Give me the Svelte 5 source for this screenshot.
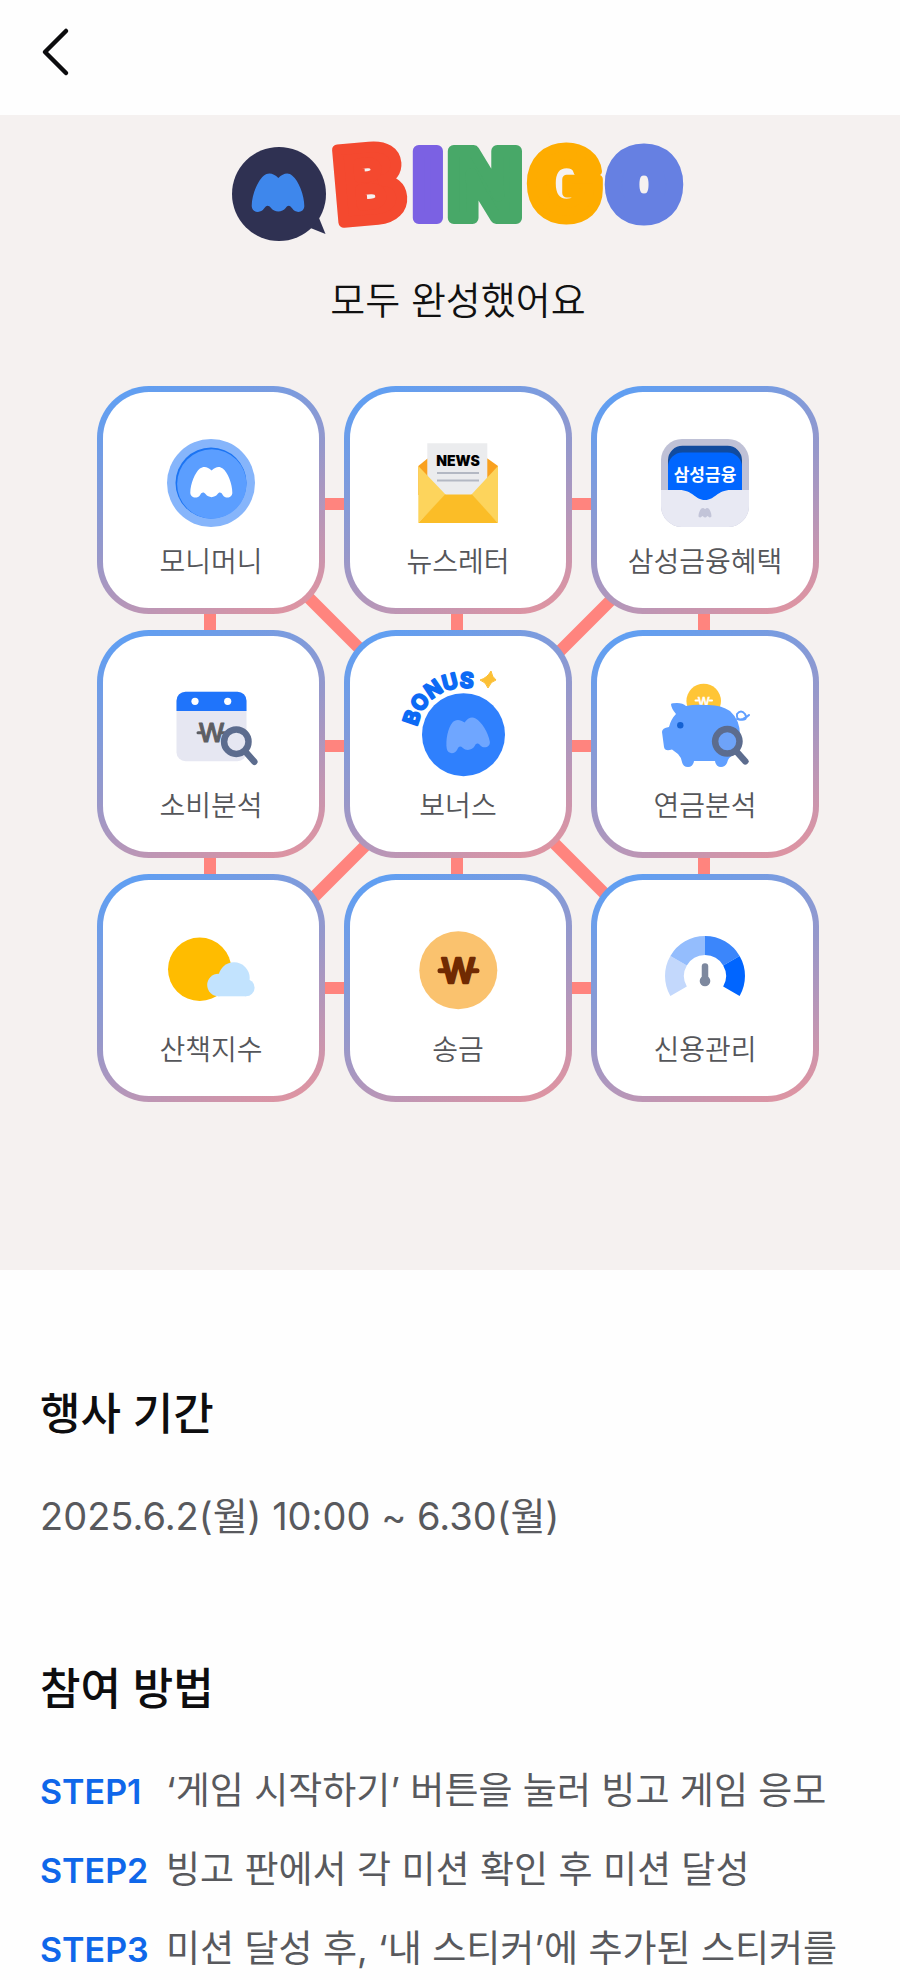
<script lang="ts">
  type Mission = { icon: string; label: string };
  type Step = { name: string; text: string };

  const missions: Mission[] = [
    { icon: "moni", label: "모니머니" },
    { icon: "news", label: "뉴스레터" },
    { icon: "benefit", label: "삼성금융혜택" },
    { icon: "calendar", label: "소비분석" },
    { icon: "bonus", label: "보너스" },
    { icon: "pension", label: "연금분석" },
    { icon: "weather", label: "산책지수" },
    { icon: "transfer", label: "송금" },
    { icon: "credit", label: "신용관리" },
  ];

  const steps: Step[] = [
    { name: "STEP1", text: "‘게임 시작하기’ 버튼을 눌러 빙고 게임 응모" },
    { name: "STEP2", text: "빙고 판에서 각 미션 확인 후 미션 달성" },
    { name: "STEP3", text: "미션 달성 후, ‘내 스티커’에 추가된 스티커를" },
  ];

  // brand mark, drawn in a 158 x 115 box
  const mark =
    "M0 98C0 65 18 22 36 7C50-4 66 0 80 14C94 0 110-4 122 7C141 22 158 65 158 98C158 118 132 122 122 106C115 94 108 95 102 104C92 118 68 118 58 104C51 95 44 94 37 106C27 122 0 118 0 98Z";
</script>

{#snippet magnifier(x: number, y: number, lens: string)}
  <g transform="translate({x} {y})" stroke="#5c6c8e">
    <path d="M10 11L18 20" stroke-width="6.5" stroke-linecap="round" />
    <circle r="12.2" fill={lens} stroke-width="6.5" />
  </g>
{/snippet}

<header class="topbar">
  <button class="back" type="button" aria-label="뒤로">
    <svg width="32" height="52" viewBox="0 0 32 52" fill="none" aria-hidden="true">
      <path d="M26 5L5 26L26 47" stroke="#0c0c0e" stroke-width="4.500" stroke-linecap="round" stroke-linejoin="round" />
    </svg>
  </button>
</header>

<main>
  <section class="hero">
    <h1 class="logo">
      <svg viewBox="0 0 452 100" width="452" height="100" role="img" aria-label="BINGO">
        <path d="M87 75L93.500 91L76 84Z" fill="#2f3152" />
        <circle cx="47" cy="51" r="47" fill="#2f3152" />
        <path d={mark} transform="translate(19.700 30.300) scale(.333)" fill="#3e87ec" />
        <g class="letters">
          <text class="wide" x="137.500" y="77" fill="#f4492f" stroke="#f4492f" transform="rotate(-5 138 42)">B</text>
          <text x="196" y="75" fill="#7b61e3" stroke="#7b61e3">I</text>
          <text x="253" y="75" fill="#48a868" stroke="#48a868">N</text>
          <text class="open" x="333" y="76" fill="#feac00" stroke="#feac00">G</text>
          <text class="tight" x="412" y="73" fill="#6680e2" stroke="#6680e2">O</text>
        </g>
      </svg>
    </h1>
    <p class="status">모두 완성했어요</p>

    <div class="board">
      <svg class="lines" viewBox="0 0 722 716" preserveAspectRatio="none" aria-hidden="true">
        <path d="M113 118H607M113 360H607M113 602H607M113 118V602M360 118V602M607 118V602M113 113L607 607M615 113L121 607" />
      </svg>
      {#each missions as mission (mission.icon)}
        <button class="cell" type="button">
          <svg class="icon" viewBox="0 0 88 88" fill="none" aria-hidden="true">
            {#if mission.icon === "moni"}
              <circle cx="44" cy="44" r="44" fill="#86b5fb" />
              <circle cx="44" cy="44" r="35.500" fill="#1b74f3" />
              <circle cx="44.800" cy="45" r="34.700" fill="#5b9eff" />
              <path d={mark} transform="translate(23.300 27.700) scale(.266)" fill="#fff" />
            {:else if mission.icon === "news"}
              <path d="M4.300 27L13.500 19.500H73.500L84 27V56H4.300Z" fill="#f9a11f" />
              <path d="M13.300 4.300H73.300V60H13.300Z" fill="#ebecee" />
              <text class="news" x="44" y="27">NEWS</text>
              <path d="M23 34H65M23 41.500H65" stroke="#b3b8c3" stroke-width="2" />
              <path d="M4.300 27L32 56L4.300 84Z" fill="#fdd45c" />
              <path d="M84 27L57 56L84 84Z" fill="#fdd45c" />
              <path d="M4.300 84L31 55.500H58L84 84Z" fill="#fbbd27" />
            {:else if mission.icon === "benefit"}
              <rect width="88" height="88" rx="21" fill="#bfc1d6" />
              <path d="M7 62V21A14.500 14.500 0 0 1 21.500 6.700H66.500A14.500 14.500 0 0 1 81 21V62Z" fill="#114b9e" />
              <path d="M7 62V28A14.500 14.500 0 0 1 21.500 13.500H66.500A14.500 14.500 0 0 1 81 28V62Z" fill="#0066ff" />
              <text class="brand" x="44" y="42">삼성금융</text>
              <path d="M0 51H18C32 51 34 61 44 61C54 61 56 51 70 51H88V67A21 21 0 0 1 67 88H21A21 21 0 0 1 0 67Z" fill="#e8e9f3" />
              <path d={mark} transform="translate(37.500 69) scale(.082)" fill="#c2c4d8" />
            {:else if mission.icon === "calendar"}
              <rect x="9.500" y="8.700" width="70" height="69.500" rx="9" fill="#e6e7f2" />
              <path d="M9.500 28V17.700A9 9 0 0 1 18.500 8.700H70.500A9 9 0 0 1 79.500 17.700V28Z" fill="#1f74fb" />
              <circle cx="28" cy="18.300" r="3.600" fill="#fff" />
              <circle cx="60.700" cy="18.300" r="3.600" fill="#fff" />
              <g fill="#5d5e63" stroke="#5d5e63" stroke-linecap="round" stroke-linejoin="round">
                <path d="M31 49.700H36M53 49.700H58" stroke-width="3" />
                <text class="won" x="44.500" y="59" font-size="26" stroke-width="1">W</text>
              </g>
              {@render magnifier(69.3, 58.7, "#e6e7f2")}
            {:else if mission.icon === "bonus"}
              <circle cx="49.500" cy="51.700" r="41.500" fill="#2f80fd" />
              <path d={mark} transform="rotate(-10 52 51) translate(30.500 35.500) scale(.276)" fill="#6fa6ff" />
              <path id="bonus-arc" d="M3.200 43.500A47 47 0 0 1 96.500 51.700" />
              <text class="bonus"><textPath href="#bonus-arc">BONUS</textPath></text>
              <path d="M77-12Q78-6 82-3Q77-2 74 5Q72-1 66-3Q73-5 77-12Z" fill="#fcc035" stroke="#fcc035" stroke-linejoin="round" />
            {:else if mission.icon === "pension"}
              <circle cx="42.700" cy="18" r="17.300" fill="#ffc536" />
              <path d="M34.500 17.500H37M48.500 17.500H51" stroke="#fff" stroke-width="2" stroke-linecap="round" />
              <text class="won" x="42.700" y="22.500" font-size="12" fill="#fff" stroke="#fff" stroke-width=".5">W</text>
              <path d="M76 36Q88 39 84 31Q80 26 76 31Q75 38 82 36Q86 34 88 32" stroke="#609fff" stroke-width="2" stroke-linecap="round" />
              <path d="M10 21Q11 20 16 20Q22 20 25 23Q34 21 44 22Q59 21 69 28Q79 37 79 52Q79 64 74 71Q67 74 66 80Q64 84 60 84Q55 84 54 78H33Q32 84 27 84Q22 84 21 79Q20 74 17 71L11 66.500Q4 69 3 64L1 49Q1 45 8 44Q10 36 15 31Q10 25 10 21Z" fill="#609fff" />
              <circle cx="19.300" cy="42.300" r="3.200" fill="#1461d2" />
              {@render magnifier(66.3, 58.3, "#6ea3f8")}
            {:else if mission.icon === "weather"}
              <circle cx="32.700" cy="42.300" r="31.700" fill="#ffbc00" />
              <g fill="#c2e3fe">
                <circle cx="51.500" cy="58" r="11.300" />
                <circle cx="67" cy="51" r="15.700" />
                <circle cx="79" cy="60.700" r="8.600" />
                <path d="M51 52H79V69.300H51Z" />
              </g>
            {:else if mission.icon === "transfer"}
              <circle cx="44.300" cy="43.300" r="39" fill="#fac26e" />
              <g fill="#702a02" stroke="#702a02" stroke-linecap="round" stroke-linejoin="round">
                <path d="M26 43.700H32M57 43.700H63" stroke-width="5" />
                <text class="won" x="44.300" y="56.300" font-size="34" stroke-width="2.500">W</text>
              </g>
            {:else}
              <g stroke-width="19">
                <path d="M17.600 64.250A30.500 30.500 0 0 1 17.600 33.750" stroke="#c3d8fc" />
                <path d="M17.600 33.750A30.500 30.500 0 0 1 44 18.500" stroke="#94bdfd" />
                <path d="M44 18.500A30.500 30.500 0 0 1 70.400 33.750" stroke="#3b86fb" />
                <path d="M70.400 33.750A30.500 30.500 0 0 1 70.400 64.250" stroke="#0065ff" />
              </g>
              <path d="M44 39.500V54" stroke="#7d889e" stroke-width="6.500" stroke-linecap="round" />
              <circle cx="44" cy="54" r="5.300" fill="#7d889e" />
            {/if}
          </svg>
          <span class="label">{mission.label}</span>
        </button>
      {/each}
    </div>
  </section>

  <section class="info">
    <h2>행사 기간</h2>
    <p>2025.6.2(월) 10:00 ~ 6.30(월)</p>
  </section>

  <section class="info">
    <h2>참여 방법</h2>
    <ol>
      {#each steps as step (step.name)}
        <li>
          <strong>{step.name}</strong>
          <span>{step.text}</span>
        </li>
      {/each}
    </ol>
  </section>
</main>

<style>
  :global(body) { background: #fefefe; color: #111; font-family: Inter, "Noto Sans CJK KR", sans-serif; }
  h1, h2, p, ol { margin: 0; padding: 0; }
  button { border: 0; padding: 0; background: none; font: inherit; color: inherit; cursor: pointer; }

  .topbar { display: flex; align-items: center; box-sizing: border-box; height: 115px; padding: 0 40px 12px; }
  .back { display: flex; }

  .hero { background: #f5f1f0; padding: 28px 81px 168px 97px; }
  .logo { display: flex; justify-content: center; }
  .logo svg { display: block; overflow: visible; }
  .letters { font: 900 92px Inter, sans-serif; text-anchor: middle; stroke-width: 12px; stroke-linejoin: round; }
  .wide { font-size: 100px; stroke-width: 11px; }
  .open { font-size: 98px; stroke-width: 9px; }
  .tight { font-size: 87px; stroke-width: 17px; }
  .status { margin-top: 31px; margin-bottom: 60px; font-size: 38px; line-height: 52px; font-weight: 350; text-align: center; }

  .board { position: relative; display: grid; grid-template-columns: repeat(3, 1fr); gap: 16px 19px; }
  .lines { position: absolute; inset: 0; width: 100%; height: 100%; }
  .lines path { stroke: #ff847e; stroke-width: 12px; fill: none; }
  .cell {
    position: relative;
    display: flex;
    flex-direction: column;
    align-items: center;
    gap: 17px;
    box-sizing: border-box;
    aspect-ratio: 1;
    padding-top: 47px;
    border: 6px solid transparent;
    border-radius: 52px;
    background: linear-gradient(#fff, #fff) padding-box, linear-gradient(155deg, #5f9ff3 5%, #9698cb 50%, #de94a2 95%) border-box;
  }
  .icon { width: 88px; height: 88px; overflow: visible; }
  .label { font-size: 28px; line-height: 36px; font-weight: 350; color: #55565a; white-space: nowrap; }

  .news { font: 900 14px Inter, sans-serif; text-anchor: middle; fill: #000; }
  .brand { font: 700 17px "Noto Sans CJK KR", sans-serif; text-anchor: middle; fill: #fff; }
  .bonus { font: 700 21px Inter, sans-serif; fill: #0d6af5; stroke: #0d6af5; stroke-width: 2px; stroke-linejoin: round; }
  .won { font-family: Inter, sans-serif; font-weight: 500; text-anchor: middle; }

  .info { padding: 112px 40px 0; }
  .info + .info { padding-top: 114px; }
  h2 { font-size: 44px; line-height: 64px; font-weight: 500; color: #0d0d0f; }
  .info p, ol { margin-top: 43px; color: #58595d; font-size: 38px; line-height: 54px; }
  .info ol { display: grid; gap: 24px; font-size: 37px; list-style: none; }
  li { display: grid; grid-template-columns: 126px 1fr; align-items: baseline; }
  strong { font-size: 34px; font-weight: 600; color: #0f67ea; }
</style>
